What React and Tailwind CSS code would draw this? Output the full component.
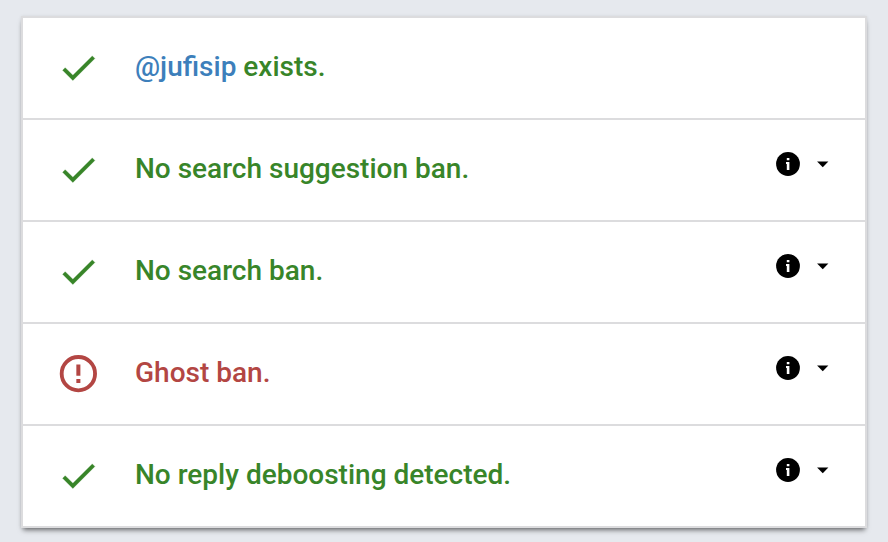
const CHECKS = [
  { handle: "@jufisip", text: " exists.", ok: true, details: false },
  { text: "No search suggestion ban.", ok: true, details: true },
  { text: "No search ban.", ok: true, details: true },
  { text: "Ghost ban.", ok: false, details: true },
  { text: "No reply deboosting detected.", ok: true, details: true },
];

function StatusIcon({ ok }) {
  return (
    <svg viewBox="-0.2 0.2 24 24" className="size-11 shrink-0" fill="currentColor" aria-hidden="true">
      {ok ? (
        <path d="M9 16.17L4.83 12l-1.42 1.41L9 19 21 7l-1.41-1.41z" stroke="currentColor" strokeWidth="0.15" />
      ) : (
        <>
          <circle cx="12" cy="12" r="9.1" fill="none" stroke="currentColor" strokeWidth="2.1" />
          <path d="M10.9 7h2.2v6.1h-2.2zM10.900 14.900h2.200v2.200h-2.200z" />
        </>
      )}
    </svg>
  );
}

function DetailsButton({ label }) {
  return (
    <button type="button" aria-label={`Details: ${label}`} className="mb-3 flex items-center gap-[7px] text-black">
      <svg viewBox="0 0 28 28" className="size-7" aria-hidden="true">
        <circle cx="14" cy="14" r="11.9" fill="currentColor" />
        <path d="M12.8 8h2.6v2.3h-2.6zM12 12.100h3.400v7.900h-2.600v-6.100H12z" fill="white" />
      </svg>
      <svg viewBox="0 0 24 24" className="size-7" fill="currentColor" aria-hidden="true">
        <path d="M6.9 9.8h9.700L11.800 14.800z" />
      </svg>
    </button>
  );
}

export default function App() {
  return (
    <main className="min-h-screen bg-[#e6e9ee] px-[21px] py-4 font-['Roboto',sans-serif]">
      <ul className="divide-y-2 divide-[#dcdcde] border-2 border-[#dcdcde] bg-white shadow-[0_4px_5px_-2px_rgba(0,0,0,0.55),0_0_3px_rgba(0,0,0,0.08)]">
        {CHECKS.map(({ handle, text, ok, details }) => (
          <li
            key={text}
            className={`flex items-center py-7 pr-7 pl-[33px] text-[28px] font-medium ${ok ? "text-[#388529]" : "text-[#b34643]"}`}
          >
            <StatusIcon ok={ok} />
            <p className="ml-[35px] flex-1 pb-0.5 leading-9">
              {handle && <a href="#profile" className="text-[#3d7fbb]">{handle}</a>}
              {text}
            </p>
            {details && <DetailsButton label={text} />}
          </li>
        ))}
      </ul>
    </main>
  );
}
